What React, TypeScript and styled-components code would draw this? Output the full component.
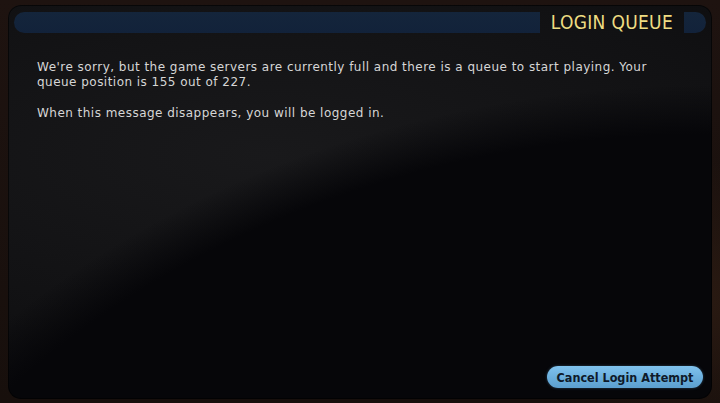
import React from "react";
import styled, { createGlobalStyle } from "styled-components";

const Global = createGlobalStyle`
  html, body { margin: 0; padding: 0; }
  body {
    width: 720px;
    height: 403px;
    overflow: hidden;
    background: #1b110e;
  }
`;

const Screen = styled.div`
  width: 720px;
  height: 403px;
  box-sizing: border-box;
  padding: 5px 8px 4px 8px;
  background:
    radial-gradient(ellipse 300px 200px at 690px 300px, #2a1a12 0%, transparent 70%),
    linear-gradient(180deg, #1e1310 0%, #170f0c 100%);
  display: flex;
`;

const Panel = styled.div`
  flex: 1;
  border-radius: 13px;
  overflow: hidden;
  display: flex;
  flex-direction: column;
  background:
    radial-gradient(ellipse 1000px 820px at 700px 900px, #060609 94%, rgba(6,6,9,0) 100%),
    radial-gradient(ellipse 700px 260px at 260px 150px, #19191b 0%, #111113 70%, #0c0c0e 100%);
  box-shadow: inset 0 0 0 1px rgba(0,0,0,0.6);
`;

const Header = styled.div`
  display: flex;
  align-items: center;
  height: 21px;
  padding: 7px 6px 0 6px;
`;

const Bar = styled.div<{ $side: "left" | "right" }>`
  height: 21px;
  background: linear-gradient(180deg, #14253b 0%, #12223a 100%);
  border-radius: ${(p) => (p.$side === "left" ? "11px 0 0 11px" : "0 11px 11px 0")};
  flex: ${(p) => (p.$side === "left" ? "1" : "0 0 22px")};
`;

const Title = styled.div`
  padding: 0 11px;
  font-family: "DejaVu Sans Condensed", "DejaVu Sans", sans-serif;
  font-size: 19px;
  letter-spacing: 0.3px;
  color: #eedc82;
  line-height: 21px;
  white-space: nowrap;
`;

const Body = styled.div`
  flex: 1;
  display: flex;
  flex-direction: column;
  padding: 27px 29px 11px 29px;
`;

const Para = styled.p`
  margin: 0 0 16px 0;
  font-family: "DejaVu Sans", sans-serif;
  font-size: 12px;
  line-height: 15px;
  letter-spacing: 0.47px;
  color: #d6d6d6;
  white-space: nowrap;
`;

const Footer = styled.div`
  margin-top: auto;
  display: flex;
  justify-content: flex-end;
  margin-right: -20px;
`;

const Button = styled.button`
  height: 22px;
  width: 156px;
  border: none;
  border-radius: 11px;
  padding: 0;
  background: linear-gradient(180deg, #80c3ee 0%, #6aaedc 55%, #5c9fcf 100%);
  box-shadow: 0 0 3px rgba(110, 180, 230, 0.35);
  font-family: "DejaVu Sans Condensed", "DejaVu Sans", sans-serif;
  font-weight: bold;
  font-size: 12.5px;
  letter-spacing: 0;
  color: #0e1a2a;
  cursor: pointer;
`;

export default function App() {
  return (
    <>
      <Global />
      <Screen>
        <Panel>
          <Header>
            <Bar $side="left" />
            <Title>LOGIN QUEUE</Title>
            <Bar $side="right" />
          </Header>
          <Body>
            <Para>
              We're sorry, but the game servers are currently full and there is a queue to start playing. Your
              <br />
              queue position is 155 out of 227.
            </Para>
            <Para>When this message disappears, you will be logged in.</Para>
            <Footer>
              <Button>Cancel Login Attempt</Button>
            </Footer>
          </Body>
        </Panel>
      </Screen>
    </>
  );
}
